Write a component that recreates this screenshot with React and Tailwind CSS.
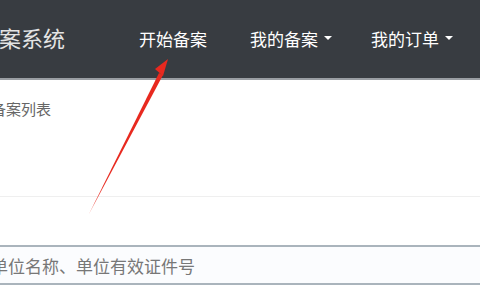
export default function App() {
  return (
    <div className="relative w-[480px] h-[300px] overflow-hidden bg-white" style={{ fontFamily: '"Noto Sans CJK SC", "Noto Sans", sans-serif' }}>
      {/* Top bar */}
      <div className="h-[80px] bg-[#383c41] border-b-2 border-[#9a9ea3] flex items-center">
        <div className="ml-[-1px] text-[22px] leading-none text-[#e4e4e4] pb-[4px]">案系统</div>
        <nav className="flex items-center ml-[74px] text-[17px] leading-none text-white pb-[2px]">
          <a href="#">开始备案</a>
          <a href="#" className="ml-[43px] flex items-center">
            我的备案
            <span className="ml-[6px] w-0 h-0 border-l-[4px] border-r-[4px] border-t-[4px] border-l-transparent border-r-transparent border-t-white"></span>
          </a>
          <a href="#" className="ml-[39px] flex items-center">
            我的订单
            <span className="ml-[6px] w-0 h-0 border-l-[4px] border-r-[4px] border-t-[4px] border-l-transparent border-r-transparent border-t-white"></span>
          </a>
        </nav>
      </div>

      {/* Breadcrumb area */}
      <div className="h-[117px] border-b border-[#efefef]">
        <div className="ml-[-9px] pt-[21px] text-[15px] leading-none text-[#666]">备案列表</div>
      </div>

      {/* Search input */}
      <div className="pt-[48px]">
        <div className="h-[40px] border-y-2 border-[#aab4bc] bg-[#fbfcfe] flex items-center">
          <span className="ml-[-9px] text-[17px] leading-none text-[#777]">单位名称、单位有效证件号</span>
        </div>
      </div>

      {/* Red annotation arrow */}
      <svg className="absolute left-0 top-0 pointer-events-none" width="480" height="300" viewBox="0 0 480 300">
        <polygon points="89,214 159,73 163,75" fill="#e8291f" />
        <polygon points="168,59 155,69 163,76" fill="#e8291f" />
      </svg>
    </div>
  );
}
